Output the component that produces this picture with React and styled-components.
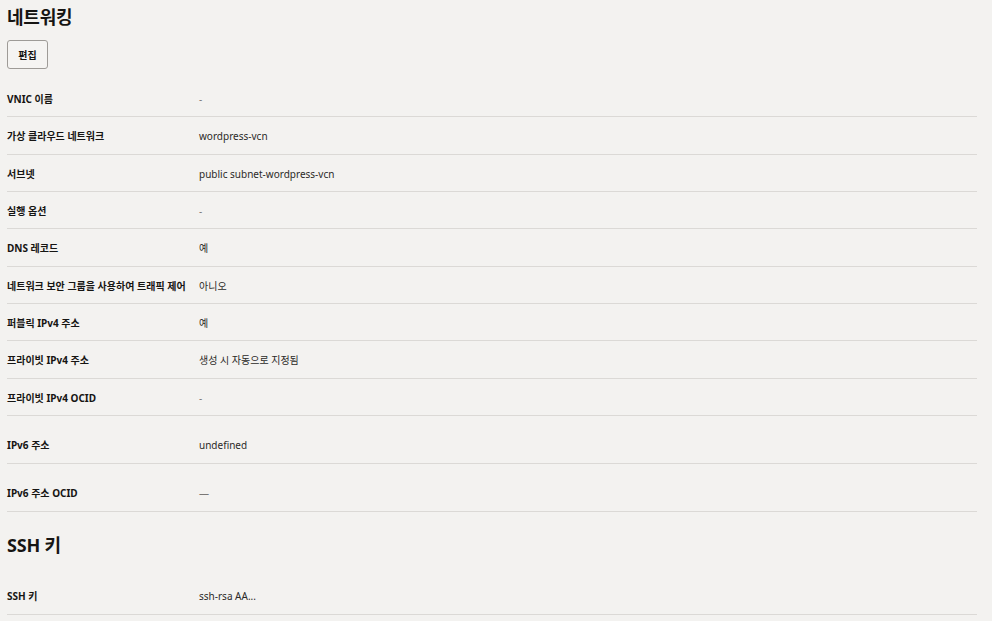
import React, { Fragment } from 'react'
import styled, { createGlobalStyle } from 'styled-components'

const GlobalStyle = createGlobalStyle`
  html,
  body {
    margin: 0;
    background-color: #f3f2f0;
  }

  body {
    font-family: 'Noto Sans', 'Noto Sans CJK KR', sans-serif;
    color: #161513;
  }
`

const Page = styled.div`
  width: 970px;
  padding: 0 7px;
`

const Heading = styled.h2`
  margin: ${(p) => (p.first ? '6px 0 12px' : '22px 0 11px')};
  font-size: 18px;
  line-height: 22px;
  font-weight: 700;
  letter-spacing: -0.2px;
`

const Button = styled.button`
  display: block;
  width: 41px;
  height: 29px;
  margin-bottom: 11px;
  padding: 0;
  border: 1px solid #9e9b97;
  border-radius: 3px;
  background-color: #f5f4f2;
  font-family: inherit;
  font-size: 10px;
  font-weight: 700;
  color: #161513;
  cursor: pointer;
`

const Row = styled.div`
  display: grid;
  grid-template-columns: 192px 1fr;
  align-items: center;
  box-sizing: border-box;
  height: ${(p) => (p.tall ? '48px' : '37.33px')};
  padding-top: ${(p) => (p.tall ? '12px' : '3px')};
  border-bottom: 1px solid #dbd9d6;
  font-size: 10px;
  line-height: 13px;
`

const Label = styled.div`
  font-weight: 700;
  white-space: nowrap;
`

const Value = styled.div`
  color: ${(p) => (p.muted ? '#7a7876' : '#2b2a28')};
`

const networking = [
  { label: 'VNIC 이름', value: '-', muted: true },
  { label: '가상 클라우드 네트워크', value: 'wordpress-vcn' },
  { label: '서브넷', value: 'public subnet-wordpress-vcn' },
  { label: '실행 옵션', value: '-', muted: true },
  { label: 'DNS 레코드', value: '예' },
  { label: '네트워크 보안 그룹을 사용하여 트래픽 제어', value: '아니오' },
  { label: '퍼블릭 IPv4 주소', value: '예' },
  { label: '프라이빗 IPv4 주소', value: '생성 시 자동으로 지정됨' },
  { label: '프라이빗 IPv4 OCID', value: '-', muted: true },
  { label: 'IPv6 주소', value: 'undefined', tall: true },
  { label: 'IPv6 주소 OCID', value: '—', muted: true, tall: true },
]

const sshKeys = [{ label: 'SSH 키', value: 'ssh-rsa AA...', tall: true }]

const Details = ({ rows }) => (
  <Fragment>
    {rows.map((row) => (
      <Row key={row.label} tall={row.tall}>
        <Label>{row.label}</Label>
        <Value muted={row.muted}>{row.value}</Value>
      </Row>
    ))}
  </Fragment>
)

const App = () => {
  return (
    <Page>
      <GlobalStyle />
      <Heading first>네트워킹</Heading>
      <Button>편집</Button>
      <Details rows={networking} />

      <Heading>SSH 키</Heading>
      <Details rows={sshKeys} />
    </Page>
  )
}

export default App
